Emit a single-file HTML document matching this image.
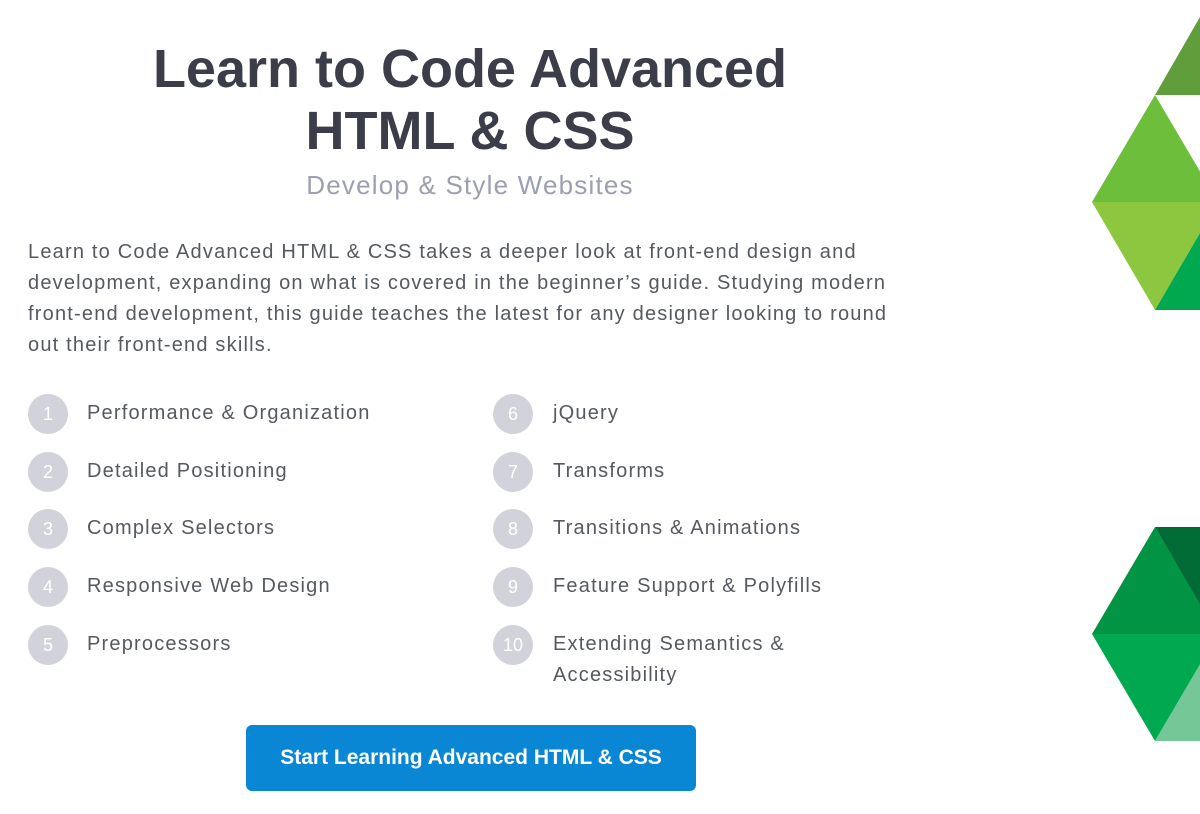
<!DOCTYPE html>
<html><head><meta charset="utf-8"><style>
body{margin:0;width:1200px;height:814px;background:#fff;overflow:hidden;position:relative;font-family:"Liberation Sans",sans-serif;}
.a{position:absolute;white-space:nowrap;}
h1{position:absolute;left:0;width:940px;text-align:center;margin:0;font-size:54px;font-weight:bold;color:#3b3e48;line-height:62px;}
.sub{left:0;width:940px;text-align:center;font-size:26px;color:#9b9fb0;top:170px;letter-spacing:1.2px;}
.p{left:28px;font-size:20px;color:#555a60;line-height:31px;top:237px;letter-spacing:1.2px;}
.c{position:absolute;width:40px;height:40px;border-radius:50%;background:#d2d3da;color:#fff;font-size:18px;text-align:center;line-height:40px;}
.t{position:absolute;font-size:20px;color:#555a60;white-space:nowrap;line-height:31px;letter-spacing:1.2px;margin-top:2px;}
.btn{position:absolute;left:246px;top:725px;width:450px;height:66px;background:#0a87d4;border-radius:6px;color:#fff;font-weight:bold;font-size:21px;text-align:center;line-height:66px;}
</style></head><body>
<h1 style="top:38px">Learn to Code Advanced</h1>
<h1 style="top:100px">HTML &amp; CSS</h1>
<div class="a sub">Develop &amp; Style Websites</div>
<div class="a p">Learn to Code Advanced HTML &amp; CSS takes a deeper look at front-end design and<br>development, expanding on what is covered in the beginner’s guide. Studying modern<br>front-end development, this guide teaches the latest for any designer looking to round<br>out their front-end skills.</div>

<div class="c" style="left:28px;top:394px">1</div><div class="t" style="left:87px;top:396px">Performance &amp; Organization</div>
<div class="c" style="left:28px;top:452px">2</div><div class="t" style="left:87px;top:454px">Detailed Positioning</div>
<div class="c" style="left:28px;top:509px">3</div><div class="t" style="left:87px;top:511px">Complex Selectors</div>
<div class="c" style="left:28px;top:567px">4</div><div class="t" style="left:87px;top:569px">Responsive Web Design</div>
<div class="c" style="left:28px;top:625px">5</div><div class="t" style="left:87px;top:627px">Preprocessors</div>

<div class="c" style="left:493px;top:394px">6</div><div class="t" style="left:553px;top:396px">jQuery</div>
<div class="c" style="left:493px;top:452px">7</div><div class="t" style="left:553px;top:454px">Transforms</div>
<div class="c" style="left:493px;top:509px">8</div><div class="t" style="left:553px;top:511px">Transitions &amp; Animations</div>
<div class="c" style="left:493px;top:567px">9</div><div class="t" style="left:553px;top:569px">Feature Support &amp; Polyfills</div>
<div class="c" style="left:493px;top:625px">10</div><div class="t" style="left:553px;top:627px">Extending Semantics &amp;<br>Accessibility</div>

<div class="btn">Start Learning Advanced HTML &amp; CSS</div>

<svg class="a" style="left:0;top:0" width="1200" height="814">
<polygon points="1155,95 1200,17 1200,95" fill="#5f9e3a"/>
<polygon points="1155,95 1092,202 1218,202" fill="#6dbe3a"/>
<polygon points="1092,202 1218,202 1155,310" fill="#8dc63f"/>
<polygon points="1155,310 1200,233 1200,310" fill="#00a94f"/>
<polygon points="1155,527 1092,634 1218,634" fill="#009444"/>
<polygon points="1155,527 1200,527 1200,604" fill="#006b35"/>
<polygon points="1092,634 1218,634 1155,741" fill="#00a84f"/>
<polygon points="1155,741 1200,741 1200,664" fill="#76c797"/>
</svg>
</body></html>
